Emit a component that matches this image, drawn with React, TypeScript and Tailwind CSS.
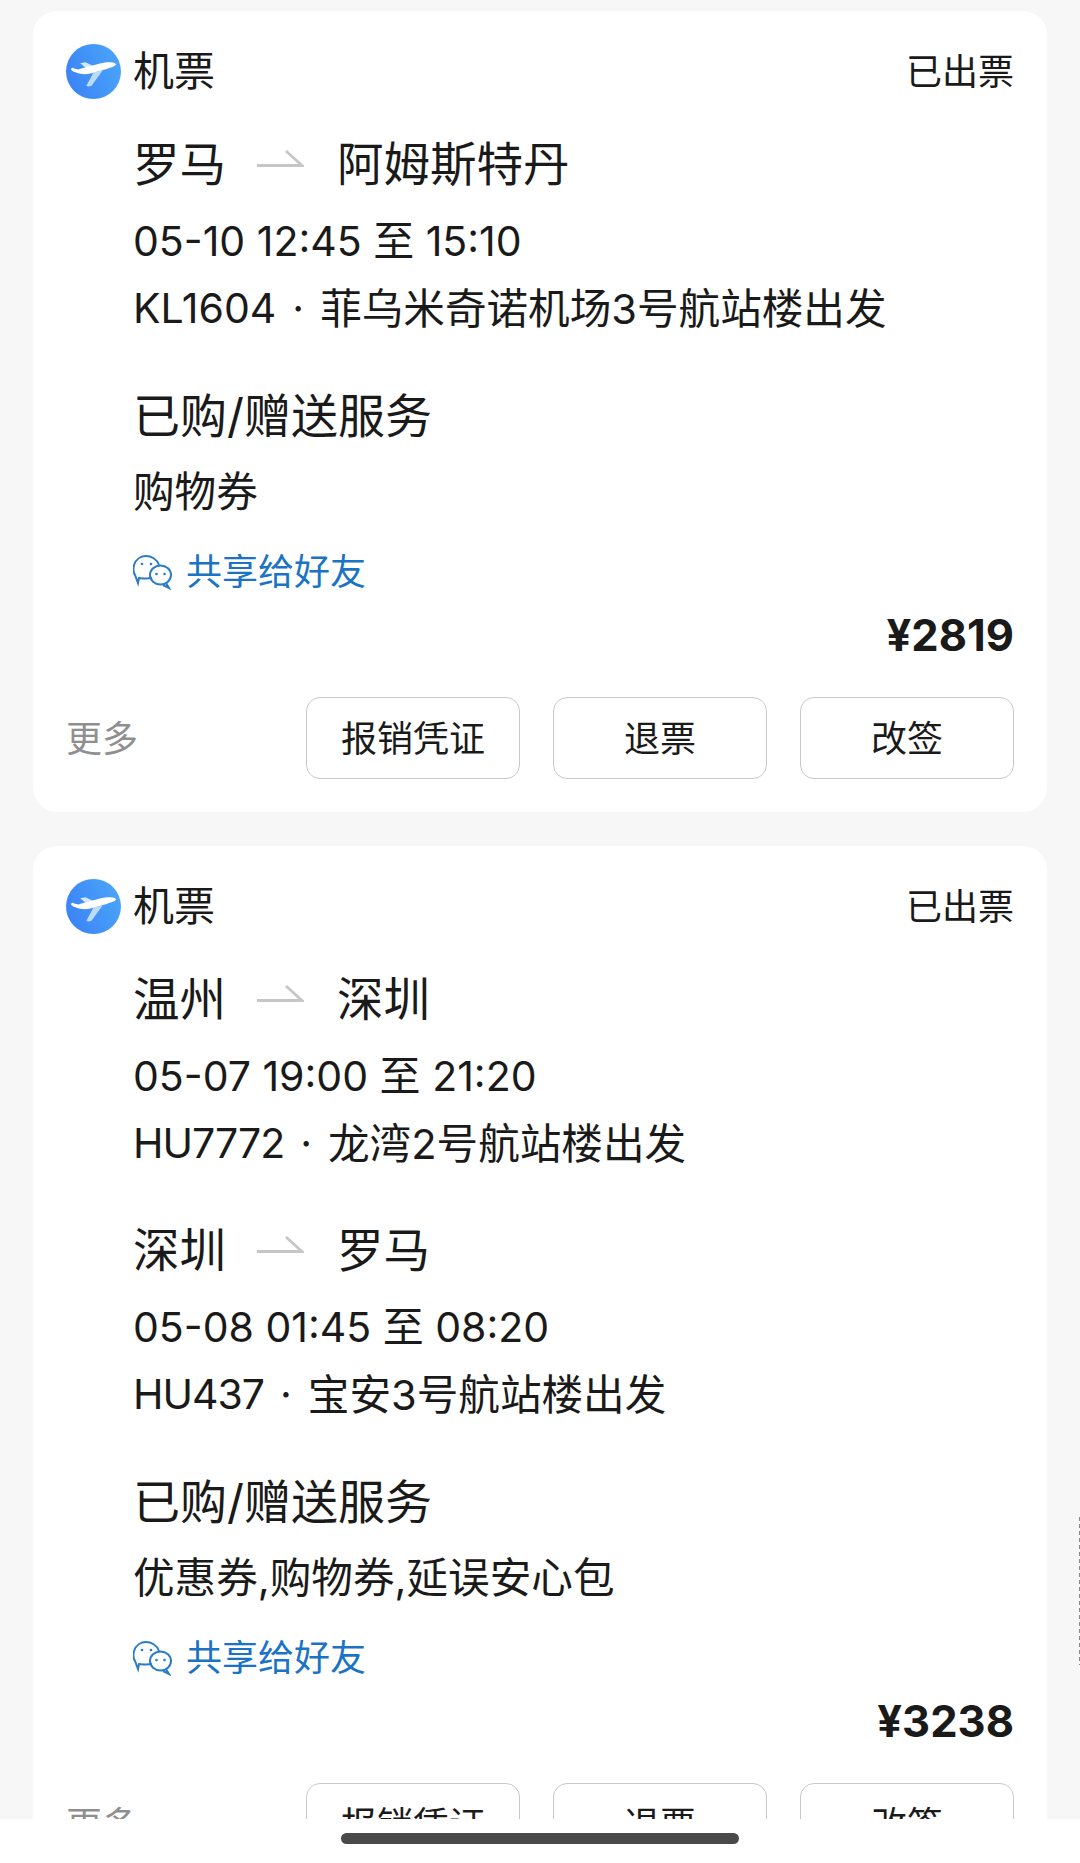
import React from "react";

const FONT = "font-['Inter','Noto_Sans_CJK_SC',sans-serif]";

function PlaneBadge() {
  return (
    <svg width="55" height="55" viewBox="0 0 54 54" className="shrink-0 -translate-y-px">
      <defs>
        <linearGradient id="planeBg" x1="0" y1="0.7" x2="1" y2="0.3">
          <stop offset="0" stopColor="#3b82f6" />
          <stop offset="1" stopColor="#4aa5f9" />
        </linearGradient>
      </defs>
      <circle cx="27" cy="27" r="27" fill="url(#planeBg)" />
      <path d="M27 28 L36 26 L25 41 C23 42 21 42 20 41 Z" fill="#bcdcfb" />
      <path d="M14 19 L19 18 L28 22 L20 24 Z" fill="#d5e9fd" />
      <path d="M5 25 C5 23 7 23 8 24 L12 25 C20 23 32 19 40 18 C44 17.500 49 18 49 20 C49 22 44 23 40 24.500 L24 29 C20 30 16 30 13 29 C10 28 6 27 5 25 Z" fill="#ffffff" />
    </svg>
  );
}

function Arrow() {
  return (
    <svg width="47" height="33" viewBox="0 0 47 33" className="shrink-0" fill="none">
      <path d="M0 16.500 H45 L29 2" stroke="#c6c6c6" strokeWidth="2.800" />
    </svg>
  );
}

function WeChat() {
  return (
    <svg width="40" height="36" viewBox="0 0 40 36" fill="none" stroke="#2a7cc7" strokeWidth="2" className="shrink-0">
      <path d="M19 24 C12 25 8 24 6 24 L5 29 L2 21 C0 18 0 15 1 11 C3 5 8 2 13 2 C18 2 24 5 26 11" />
      <ellipse cx="27.500" cy="21" rx="10.500" ry="9.500" />
      <path d="M33 29 L36 34 L30 31" />
      <circle cx="9" cy="10" r="1.300" fill="#2a7cc7" stroke="none" />
      <circle cx="18" cy="10" r="1.300" fill="#2a7cc7" stroke="none" />
      <circle cx="23.500" cy="20" r="1.300" fill="#2a7cc7" stroke="none" />
      <circle cx="31.500" cy="20" r="1.300" fill="#2a7cc7" stroke="none" />
    </svg>
  );
}

type Leg = { from: string; to: string; time: string; flight: string; tight: boolean; place: string };

function LegBlock({ leg, first }: { leg: Leg; first: boolean }) {
  return (
    <div className={first ? "mt-[36px]" : "mt-[54px]"}>
      <div className="flex h-[60px] items-center text-[46.500px] text-[#1a1a1a]">
        <span>{leg.from}</span>
        <span className="ml-[31px] mr-[33px]"><Arrow /></span>
        <span>{leg.to}</span>
      </div>
      <div className="mt-[24px] flex h-[46px] items-center whitespace-pre text-[41px] text-[#1a1a1a]">{leg.time}</div>
      <div className="mt-[21px] flex h-[46px] items-center whitespace-pre text-[41px] text-[#1a1a1a]">
        <span className={leg.tight ? "tracking-[-1px]" : ""}>{leg.flight}</span>
        <span className="mx-[16px]">·</span>
        <span className="text-[41.600px]">{leg.place}</span>
      </div>
    </div>
  );
}

function Action({ label }: { label: string }) {
  return (
    <div className="flex h-[82px] w-[214px] items-center justify-center rounded-[14px] border border-[#c9c9c9] pt-[2px] text-[36px] text-[#1a1a1a]">
      {label}
    </div>
  );
}

function Card({ legs, services, price }: { legs: Leg[]; services: string; price: string }) {
  return (
    <div className="rounded-[24px] bg-white px-[33px] pb-[33px] pt-[34px]">
      <div className="flex h-[54px] items-center">
        <PlaneBadge />
        <span className="ml-[12px] text-[41px] text-[#1a1a1a]">机票</span>
        <span className="ml-auto text-[36px] text-[#1a1a1a]">已出票</span>
      </div>
      <div className="ml-[67px]">
        {legs.map((leg, i) => (
          <LegBlock key={i} leg={leg} first={i === 0} />
        ))}
        <div className="mt-[54px] flex h-[60px] items-center text-[47px] text-[#1a1a1a]">已购/赠送服务</div>
        <div className="mt-[23px] flex h-[46px] items-center text-[41.600px] text-[#1a1a1a]">{services}</div>
        <div className="mt-[34px] flex h-[46px] items-center">
          <WeChat />
          <span className="ml-[13px] text-[36px] text-[#1a73c4]">共享给好友</span>
        </div>
      </div>
      <div className="mt-[16px] flex h-[50px] items-center justify-end text-[43.500px] font-bold text-[#1a1a1a]">{price}</div>
      <div className="mt-[36px] flex items-center">
        <span className="pt-[2px] text-[36px] text-[#8f8f8f]">更多</span>
        <div className="ml-auto flex gap-[33px]">
          <Action label="报销凭证" />
          <Action label="退票" />
          <Action label="改签" />
        </div>
      </div>
    </div>
  );
}

export default function App() {
  return (
    <div className={`relative h-[1863px] w-[1080px] overflow-hidden bg-[#f7f7f7] ${FONT}`}>
      <div className="flex flex-col gap-[34px] px-[33px] pt-[11px]">
        <Card
          legs={[{ from: "罗马", to: "阿姆斯特丹", time: "05-10 12:45 至 15:10", flight: "KL1604", tight: false, place: "菲乌米奇诺机场3号航站楼出发" }]}
          services="购物券"
          price="¥2819"
        />
        <Card
          legs={[
            { from: "温州", to: "深圳", time: "05-07 19:00 至 21:20", flight: "HU7772", tight: true, place: "龙湾2号航站楼出发" },
            { from: "深圳", to: "罗马", time: "05-08 01:45 至 08:20", flight: "HU437", tight: true, place: "宝安3号航站楼出发" },
          ]}
          services="优惠券,购物券,延误安心包"
          price="¥3238"
        />
      </div>
      <div className="absolute bottom-0 left-0 right-0 flex h-[44px] items-start justify-center bg-white pt-[14px]">
        <div className="h-[11px] w-[398px] rounded-full bg-[#4a4a4a]" />
      </div>
      <div className="absolute right-0 top-[1517px] h-[148px] w-[1px] bg-[repeating-linear-gradient(to_bottom,#8a8a8a_0px,#8a8a8a_4px,transparent_4px,transparent_7px)]" />
    </div>
  );
}
